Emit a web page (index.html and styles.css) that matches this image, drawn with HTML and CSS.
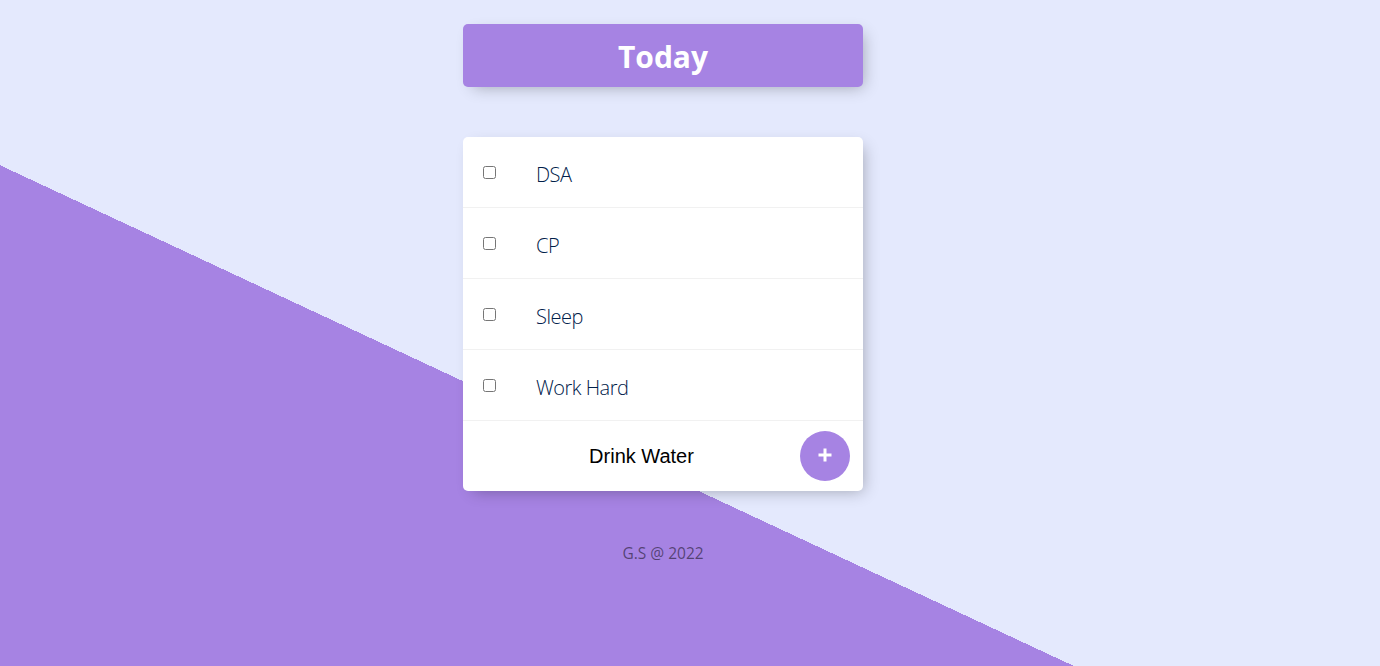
FILE: index.html
```html
<!DOCTYPE html>
<html lang="en">
<head>
<meta charset="utf-8">
<title>To-Do List</title>
<link rel="stylesheet" href="styles.css">
</head>
<body>
  <div class="box heading">
    <h1 class="title">Today</h1>
  </div>
  <div class="box list">
    <div class="item"><input type="checkbox" class="check"><p class="label">DSA</p></div>
    <div class="item"><input type="checkbox" class="check"><p class="label">CP</p></div>
    <div class="item"><input type="checkbox" class="check"><p class="label">Sleep</p></div>
    <div class="item"><input type="checkbox" class="check"><p class="label">Work Hard</p></div>
    <form class="item add-form" onsubmit="return false">
      <input type="text" class="new-item" value="Drink Water" autocomplete="off">
      <button type="submit" class="add-btn" aria-label="Add">
        <svg class="plus" width="14" height="14" viewBox="0 0 14 14"><path d="M7 0.5V13.5M0.5 7H13.5" stroke="#fff" stroke-width="3"/></svg>
      </button>
    </form>
  </div>
  <footer class="footer">G.S @ 2022</footer>
</body>
</html>
```

FILE: styles.css
```css
html {
  background-color: #E4E9FD;
  background-image: linear-gradient(25deg, #A683E3 50%, #E4E9FD 50%);
  background-size: 100% 974px;
  background-repeat: no-repeat;
  min-height: 100%;
  font-family: "Open Sans", "Noto Sans", sans-serif;
}

body {
  margin: 0;
  padding: 24px 54px 0 0;
}

.box {
  width: 400px;
  margin: 0 auto 50px;
  background: #fff;
  border-radius: 5px;
  box-shadow: 5px 5px 15px -5px rgba(0, 0, 0, 0.3);
}

.heading {
  background-color: #A683E3;
  text-align: center;
}

.title {
  margin: 0;
  padding: 11px 10px 9px;
  color: #fff;
  font-size: 30px;
  font-weight: 700;
  line-height: 43px;
}

.item {
  height: 70px;
  display: flex;
  align-items: center;
  border-bottom: 1px solid #F1F1F1;
}

.check {
  margin: 20px;
  width: 13px;
  height: 13px;
}

.label {
  margin: 0;
  padding: 24px 20px 19px;
  font-size: 20px;
  font-weight: 300;
  letter-spacing: -0.5px;
  color: #00204a;
  line-height: 27px;
}

.add-form {
  border-bottom: none;
  margin-left: 20px;
}

.new-item {
  text-align: center;
  height: 60px;
  border: none;
  outline: none;
  font-family: "Liberation Sans", Arial, sans-serif;
  font-size: 20px;
  width: 313px;
  padding: 1px 2px;
  color: #000;
  background: transparent;
}

.add-btn {
  height: 50px;
  width: 50px;
  border-radius: 50%;
  border: 0;
  background-color: #A683E3;
  padding: 0 0 3px;
  display: flex;
  align-items: center;
  justify-content: center;
}

.plus {
  display: block;
}

.footer {
  color: rgba(0, 0, 0, 0.5);
  text-align: center;
  font-size: 15.5px;
  padding-top: 1px;
}
```
